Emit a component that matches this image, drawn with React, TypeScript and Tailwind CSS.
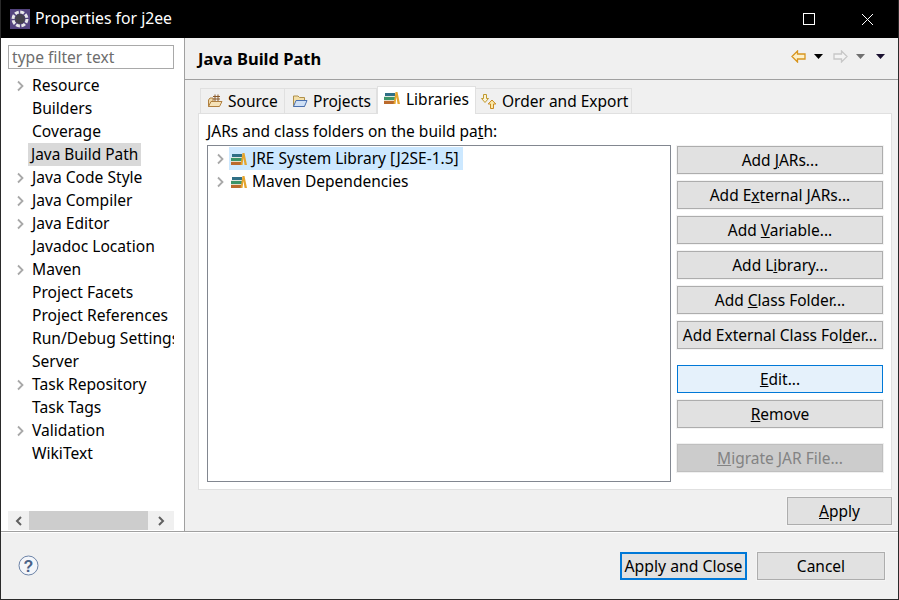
import type { ReactNode } from 'react';

const font = { fontFamily: '"Noto Sans", "Open Sans", sans-serif' };

const treeItems = [
  { label: 'Resource', arrow: true },
  { label: 'Builders' },
  { label: 'Coverage' },
  { label: 'Java Build Path', selected: true },
  { label: 'Java Code Style', arrow: true },
  { label: 'Java Compiler', arrow: true },
  { label: 'Java Editor', arrow: true },
  { label: 'Javadoc Location' },
  { label: 'Maven', arrow: true },
  { label: 'Project Facets' },
  { label: 'Project References' },
  { label: 'Run/Debug Settings' },
  { label: 'Server' },
  { label: 'Task Repository', arrow: true },
  { label: 'Task Tags' },
  { label: 'Validation', arrow: true },
  { label: 'WikiText' },
];

function Chevron({ className = '' }: { className?: string }) {
  return (
    <svg width="8" height="12" viewBox="0 0 8 12" className={className}>
      <path d="M2 1.5 L6.5 6 L2 10.5" fill="none" stroke="#a8a8a8" strokeWidth="1.8" />
    </svg>
  );
}

function LibraryIcon() {
  return (
    <svg width="16" height="16" viewBox="0 0 16 16" className="shrink-0">
      <rect x="1" y="3" width="10" height="3" fill="#2f6f86" />
      <rect x="0" y="6" width="11" height="1" fill="#dfe6e0" />
      <rect x="0" y="7" width="11" height="3" fill="#3c9468" />
      <rect x="0" y="10" width="11" height="1" fill="#e8dcc8" />
      <rect x="0" y="11" width="11" height="3" fill="#bb6a2c" />
      <path d="M9.5 14 L11.5 2 L13.5 2 L16 14 L13.6 14 L12.4 7 L11.5 14 Z" fill="#e5a52e" />
    </svg>
  );
}

function SourceIcon() {
  return (
    <svg width="16" height="16" viewBox="0 0 16 16" className="shrink-0">
      <path d="M1.5 7 L3 5 H6 V13.5 H1.5 Z" fill="#f0d9a8" stroke="#b08040" />
      <path d="M1.5 13.5 L4 8.5 H15 L12.5 13.5 Z" fill="#f5e2b8" stroke="#b08040" />
      <path d="M8 1.5 V8 M11 1.5 V8 M6 3.5 H13 M6 6 H13" stroke="#8a5a2a" strokeWidth="1" fill="none" />
    </svg>
  );
}

function FolderIcon() {
  return (
    <svg width="16" height="16" viewBox="0 0 16 16" className="shrink-0">
      <path d="M1.5 3 H6 L7.5 4.5 H12.5 V13.5 H1.5 Z" fill="#f3dfa8" stroke="#b0904a" />
      <path d="M1.5 13.5 L4 7.5 H15 L12.5 13.5 Z" fill="#cfe0f5" stroke="#4a70b0" />
    </svg>
  );
}

function OrderIcon() {
  return (
    <svg width="16" height="17" viewBox="0 0 16 17" className="shrink-0">
      <path d="M2.5 1.5 H5.5 V5.5 H7.5 L4 9.5 L0.5 5.5 H2.5 Z" fill="#fbf3d5" stroke="#c09a30" />
      <path d="M9.5 15.5 H12.5 V11 H14.8 L11 7 L7.2 11 H9.5 Z" fill="#fbe9a8" stroke="#c98a20" />
    </svg>
  );
}

function AppIcon() {
  return (
    <svg width="20" height="20" viewBox="0 0 20 20">
      <rect width="20" height="20" fill="#54447f" />
      <circle cx="10" cy="10" r="7" fill="none" stroke="#e8e8e8" strokeWidth="3" strokeDasharray="4 1.5" />
      <circle cx="10" cy="10" r="5" fill="#45424c" />
    </svg>
  );
}

function Tab({ icon, label, active, className = '' }: { icon: ReactNode; label: string; active?: boolean; className?: string }) {
  return (
    <div
      className={
        active
          ? `relative z-10 -mb-px flex h-[28px] items-start gap-[6px] border border-b-0 border-[#e0e0e0] bg-white pl-[6px] ${className}`
          : `flex h-[25px] items-center gap-[5px] border border-b-0 border-[#e0e0e0] bg-[#f0f0f0] ${className}`
      }
    >
      <span className={active ? 'mt-[3px]' : ''}>{icon}</span>
      <span className="whitespace-nowrap leading-[24px]">{label}</span>
    </div>
  );
}

function Btn({
  children,
  variant = 'normal',
  className = '',
}: {
  children: ReactNode;
  variant?: 'normal' | 'hover' | 'disabled' | 'default';
  className?: string;
}) {
  const styles = {
    normal: 'border-[#adadad] bg-[#e1e1e1] text-[#000] outline outline-1 outline-[#f4f4f4]',
    hover: 'border-[#0078d7] bg-[#e5f1fb] text-[#000]',
    disabled: 'border-[#bfbfbf] bg-[#cccccc] text-[#838383] outline outline-1 outline-[#f0f0f0]',
    default: 'border-2 border-[#0078d7] bg-[#e1e1e1] text-[#000]',
  }[variant];
  return (
    <div className={`flex h-[28px] items-center justify-center border pt-[2px] whitespace-nowrap ${styles} ${className}`}>
      <span>{children}</span>
    </div>
  );
}

function Sidebar() {
  return (
    <div className="flex w-[184px] shrink-0 flex-col border-r border-[#a0a0a0] bg-white pt-[7px] pl-[7px] text-[15.6px]">
      <div className="flex h-[24px] w-[166px] items-center border border-[#a9a9a9] pt-[2px] pl-[3px] text-[#6d6d6d]">
        type filter text
      </div>
      <div className="mt-[5px] w-[166px] overflow-hidden">
        {treeItems.map((item) => (
          <div key={item.label} className="relative h-[23px] whitespace-nowrap pl-[20px] leading-[23px]">
            {item.arrow && <Chevron className="absolute top-[6px] left-[8px]" />}
            {item.selected ? (
              <span className="inline-block h-[23px] bg-[#d9d9d9] px-[3px] text-[15.4px]">{item.label}</span>
            ) : (
              <span className="block w-[146px] overflow-hidden pl-[4px]">{item.label}</span>
            )}
          </div>
        ))}
      </div>
      <div className="mt-auto mb-px flex h-[19px] w-[166px] items-center bg-[#f0f0f0]">
        <div className="flex w-[21px] justify-center">
          <svg width="8" height="10" viewBox="0 0 8 10">
            <path d="M6 1 L2 5 L6 9" fill="none" stroke="#606060" strokeWidth="2" />
          </svg>
        </div>
        <div className="h-full w-[119px] bg-[#cdcdcd]" />
        <div className="flex flex-1 justify-center">
          <svg width="8" height="10" viewBox="0 0 8 10">
            <path d="M2 1 L6 5 L2 9" fill="none" stroke="#606060" strokeWidth="2" />
          </svg>
        </div>
      </div>
    </div>
  );
}

function LibraryRow({ label, selected }: { label: string; selected?: boolean }) {
  return (
    <div className="flex h-[23px] items-center">
      <Chevron className="ml-[8px] shrink-0" />
      <div className={`ml-[5px] flex h-[23px] items-center gap-[5px] pl-[2px] pr-[4px] ${selected ? 'bg-[#cce8ff]' : ''}`}>
        <LibraryIcon />
        <span className="whitespace-nowrap">{label}</span>
      </div>
    </div>
  );
}

function BuildPathPanel() {
  return (
    <div className="flex h-[377px] border border-[#e0e0e0] bg-white pl-[8px] pr-[8px] pt-[6px] pb-[7px]">
      <div className="flex min-w-0 flex-1 flex-col">
        <div className="h-[25px] leading-[22px]">
          JARs and class folders on the build pa<u>t</u>h:
        </div>
        <div className="flex-1 border border-[#828790] bg-white pt-[1px]">
          <LibraryRow label="JRE System Library [J2SE-1.5]" selected />
          <LibraryRow label="Maven Dependencies" />
        </div>
      </div>
      <div className="ml-[6px] flex w-[206px] shrink-0 flex-col gap-[7px] pt-[26px]">
        <Btn>Add <u>J</u>ARs...</Btn>
        <Btn>Add E<u>x</u>ternal JARs...</Btn>
        <Btn>Add <u>V</u>ariable...</Btn>
        <Btn>Add L<u>i</u>brary...</Btn>
        <Btn>Add <u>C</u>lass Folder...</Btn>
        <Btn>Add External Class Fol<u>d</u>er...</Btn>
        <Btn variant="hover" className="mt-[9px]"><u>E</u>dit...</Btn>
        <Btn><u>R</u>emove</Btn>
        <Btn variant="disabled" className="mt-[9px]"><u>M</u>igrate JAR File...</Btn>
      </div>
    </div>
  );
}

export default function App() {
  return (
    <div className="flex h-[600px] w-[899px] flex-col overflow-hidden border-x border-b border-[#2a2a2a] bg-[#f0f0f0] text-[15.5px] text-black" style={font}>
      <div className="-mx-px flex h-[38px] shrink-0 items-center bg-black pl-[10px] text-white">
        <AppIcon />
        <span className="ml-[5px] text-[15.75px]">Properties for j2ee</span>
        <div className="ml-auto flex h-full pr-[2px]">
          <div className="flex w-[59px] items-center justify-center">
            <div className="h-[12px] w-[12px] border border-white" />
          </div>
          <div className="flex w-[59px] items-center justify-center">
            <svg width="13" height="13" viewBox="0 0 13 13">
              <path d="M1 1 L12 12 M12 1 L1 12" stroke="#fff" strokeWidth="1" />
            </svg>
          </div>
        </div>
      </div>

      <div className="flex min-h-0 flex-1">
        <Sidebar />
        <div className="flex min-w-0 flex-1 flex-col">
          <div className="flex h-[42px] shrink-0 items-center justify-between border-b border-[#a0a0a0] pt-[2px] pl-[13px] pr-[13px]">
            <span className="text-[16.5px] font-bold">Java Build Path</span>
            <div className="mb-[7px] flex items-center">
              <svg width="15" height="13" viewBox="0 0 15 13">
                <path d="M1 6.5 L6.5 1 V4 H14 V9 H6.5 V12 Z" fill="#fdf0c8" stroke="#d8951e" strokeWidth="1.3" />
              </svg>
              <svg width="9" height="5" viewBox="0 0 9 5" className="ml-[8px]"><path d="M0 0 H9 L4.5 5 Z" fill="#000" /></svg>
              <svg width="15" height="13" viewBox="0 0 15 13" className="ml-[10px]">
                <path d="M14 6.5 L8.5 1 V4 H1 V9 H8.5 V12 Z" fill="#f4f4f4" stroke="#c8c8c8" strokeWidth="1.3" />
              </svg>
              <svg width="9" height="5" viewBox="0 0 9 5" className="ml-[8px]"><path d="M0 0 H9 L4.5 5 Z" fill="#707070" /></svg>
              <svg width="9" height="5" viewBox="0 0 9 5" className="ml-[11px]"><path d="M0 0 H9 L4.5 5 Z" fill="#1a1030" /></svg>
            </div>
          </div>
          <div className="ml-[13px] mr-[6px] flex flex-1 flex-col">
            <div className="flex h-[33px] items-end pl-[2px]">
              <Tab icon={<SourceIcon />} label="Source" className="w-[85px] pl-[6px]" />
              <Tab icon={<FolderIcon />} label="Projects" className="w-[92px] border-l-0 pl-[7px]" />
              <Tab icon={<LibraryIcon />} label="Libraries" active className="w-[99px]" />
              <Tab icon={<OrderIcon />} label="Order and Export" className="w-[156px] border-l-0 pl-[5px]" />
            </div>
            <BuildPathPanel />
            <div className="mt-[7px] flex justify-end">
              <Btn className="w-[105px]"><u>A</u>pply</Btn>
            </div>
          </div>
        </div>
      </div>

      <div className="flex h-[68px] shrink-0 items-center border-t border-[#a0a0a0] pl-[17px] pr-[13px] shadow-[inset_0_1px_0_#ffffff]">
        <svg width="21" height="21" viewBox="0 0 21 21">
          <circle cx="10.5" cy="10.5" r="9.5" fill="#f4f6fa" stroke="#6d84a8" />
          <text x="10.5" y="16.5" textAnchor="middle" fontSize="16" fontWeight="700" fill="#4a6288" fontFamily="Liberation Sans">?</text>
        </svg>
        <div className="ml-auto flex gap-[10px]">
          <Btn variant="default" className="w-[127px] text-[15.75px]">Apply and Close</Btn>
          <Btn className="w-[128px]">Cancel</Btn>
        </div>
      </div>
    </div>
  );
}
